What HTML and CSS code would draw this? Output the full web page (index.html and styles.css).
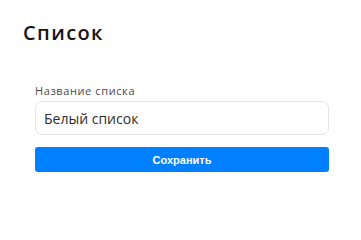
FILE: index.html
```html
<!DOCTYPE html>
<html lang="ru">
<head>
<meta charset="utf-8">
<link rel="stylesheet" href="styles.css">
</head>
<body>
<div class="page">
  <h1 class="title">Список</h1>
  <form class="form">
    <label class="label" for="name">Название списка</label>
    <input class="input" id="name" type="text" value="Белый список">
    <button class="btn" type="button">Сохранить</button>
  </form>
</div>
</body>
</html>
```
FILE: styles.css
```css
html, body {
  margin: 0;
  padding: 0;
  background: #ffffff;
}
.page {
  padding: 20px 32px 0 23px;
  font-family: "Open Sans", "DejaVu Sans", sans-serif;
}
.title {
  margin: 0;
  font-size: 20px;
  font-weight: 600;
  letter-spacing: 1.4px;
  line-height: 26px;
  color: #151515;
}
.form {
  margin: 38px 0 0 12px;
  display: flex;
  flex-direction: column;
}
.label {
  font-size: 11px;
  line-height: 14px;
  letter-spacing: 0.6px;
  color: #4a4a4a;
  margin-bottom: 3px;
}
.input {
  box-sizing: border-box;
  height: 34px;
  border: 1px solid #e4e4e4;
  border-radius: 7px;
  padding: 0 8px;
  font-family: "Open Sans", "DejaVu Sans", sans-serif;
  font-size: 14px;
  color: #2e2e2e;
  outline: none;
}
.btn {
  margin-top: 12px;
  height: 25px;
  border: none;
  border-radius: 3px;
  background: #0080ff;
  color: #ffffff;
  font-family: "Liberation Sans", Arial, sans-serif;
  font-weight: bold;
  font-size: 11px;
  padding: 0;
}
```
